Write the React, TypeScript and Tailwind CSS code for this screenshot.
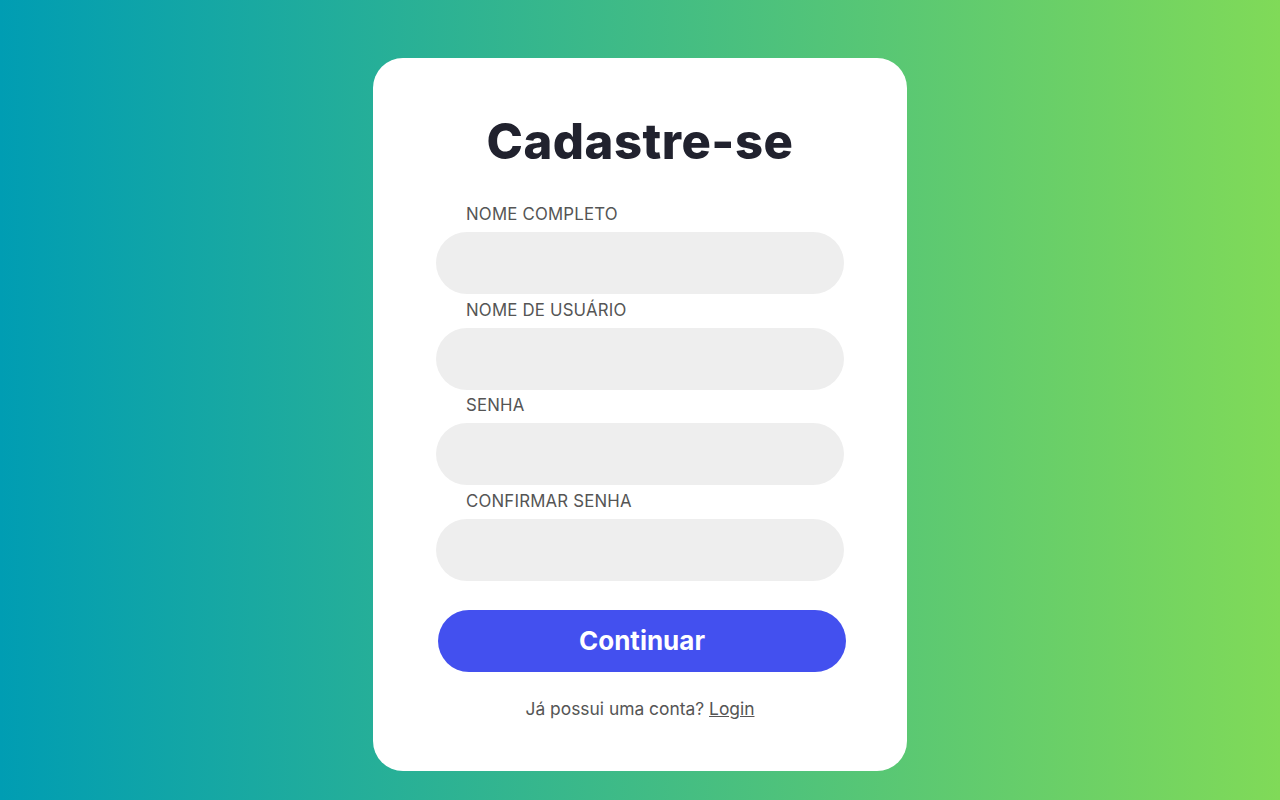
import React from "react";

const font = { fontFamily: '"Inter", "DejaVu Sans", sans-serif' };

function Field({ label, type = "text" }: { label: string; type?: string }) {
  return (
    <div className="flex flex-col">
      <label className="pl-[30px] text-[16.8px] leading-[24px] text-[#555555] tracking-[0.2px]">{label}</label>
      <input
        type={type}
        className="mt-[6px] h-[62px] w-[408px] rounded-full bg-[#eeeeee] px-6 outline-none"
      />
    </div>
  );
}

export default function App() {
  return (
    <div
      className="min-h-[800px] w-full bg-linear-to-r/srgb from-[#009db3] to-[#80da58] pt-[58px] pb-[29px] flex justify-center"
      style={font}
    >
      <div className="w-[534px] h-[713px] rounded-[30px] bg-white pt-[48px] pb-[50px] flex flex-col items-center">
        <h1 className="text-[49px] leading-[72px] font-extrabold text-[#21222e] tracking-[0.5px]">Cadastre-se</h1>
        <div className="mt-[24px] flex flex-col gap-[3.67px]">
          <Field label="NOME COMPLETO" />
          <Field label="NOME DE USUÁRIO" />
          <Field label="SENHA" type="password" />
          <Field label="CONFIRMAR SENHA" type="password" />
        </div>
        <button className="mt-[29px] ml-[4px] h-[62px] w-[408px] rounded-full bg-[#4350ef] text-white text-[26px] font-bold">
          Continuar
        </button>
        <p className="mt-[25px] text-[17.4px] leading-[24px] text-[#555555]">
          Já possui uma conta? <a className="underline">Login</a>
        </p>
      </div>
    </div>
  );
}
